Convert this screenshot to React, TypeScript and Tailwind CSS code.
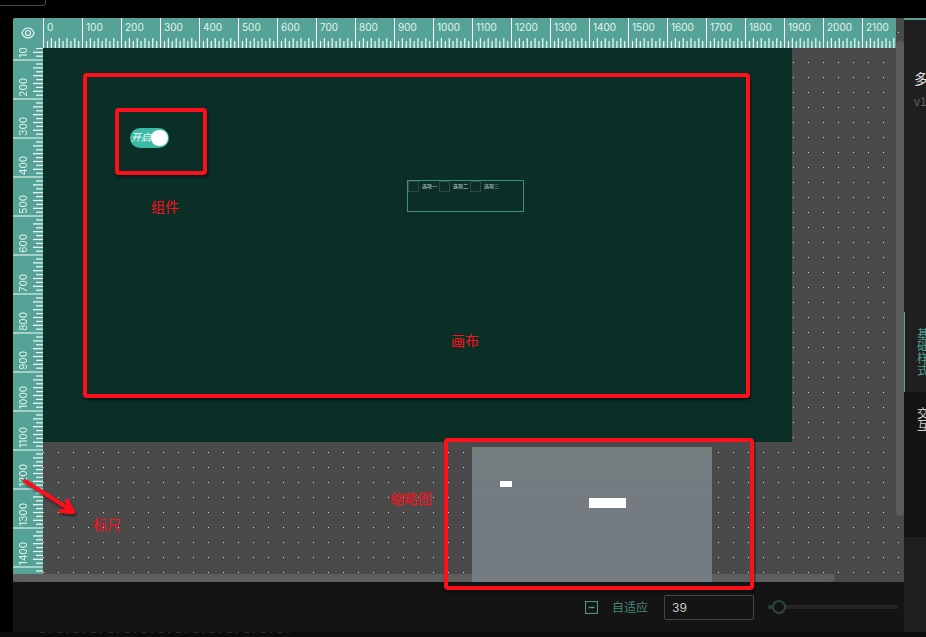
import React, { useState } from "react";

const columns = Array.from({ length: 22 }, (_, i) => i * 100);
const rows = Array.from({ length: 15 }, (_, i) => (i + 1) * 100);
const lastRowLabel = 1400;
const tickIndexes = [1, 2, 3, 4, 5, 6, 7, 8, 9];

function HorizontalRuler() {
  return (
    <div className="flex h-[30px] min-w-0 flex-1 overflow-hidden bg-[#55a396]">
      {columns.map((value) => (
        <div key={value} className="relative h-full w-[39px] shrink-0 border-l border-white">
          <span className="block pl-[3px] pt-[2px] font-['Inter','Liberation_Sans',sans-serif] text-[10px] leading-[14px] text-[#e3f3ef]">
            {value}
          </span>
          <svg className="absolute bottom-0 left-[-1px]" width="39" height="10" aria-hidden="true">
            {tickIndexes.map((n) => (
              <rect
                key={n}
                x={n * 3.9}
                y={n % 2 ? 3 : 0}
                width="1.2"
                height={n % 2 ? 7 : 10}
                fill="#f4fbf9"
              />
            ))}
          </svg>
        </div>
      ))}
    </div>
  );
}

function VerticalRuler() {
  return (
    <div className="w-[30px] shrink-0 overflow-hidden bg-[#55a396]">
      <div className="-mt-[26px] h-0">
        {rows.map((value) => (
          <div
            key={value}
            className="relative flex h-[39px] w-full items-end border-b-2 border-[#a5d0c8] pb-px pl-[3px]"
          >
            {value <= lastRowLabel && (
              <span className="rotate-180 font-['Inter','Liberation_Sans',sans-serif] text-[10px] leading-[14px] text-[#e3f3ef] [writing-mode:vertical-rl]">
                {value}
              </span>
            )}
            <svg className="absolute right-0 top-[-1px]" width="10" height="39" aria-hidden="true">
              {tickIndexes.map((n) => (
                <rect
                  key={n}
                  x={n % 2 ? 3 : 0}
                  y={n * 3.9 - 0.5}
                  width={n % 2 ? 7 : 10}
                  height="1.2"
                  fill="#f4fbf9"
                />
              ))}
            </svg>
          </div>
        ))}
      </div>
    </div>
  );
}

function CanvasObjects() {
  const [on, setOn] = useState(true);
  return (
    <>
      <label className="absolute left-[87px] top-[80px] flex h-5 w-[39px] items-center rounded-full bg-[#3bbba6] pl-px">
        <input
          type="checkbox"
          role="switch"
          checked={on}
          onChange={() => setOn(!on)}
          className="absolute inset-0 m-0 appearance-none"
        />
        <span className="text-[10px] italic leading-none text-white">开启</span>
        <span className="absolute right-px top-[2px] h-4 w-[17px] rounded-full bg-white" />
      </label>
      <fieldset className="absolute left-[364px] top-[132px] flex h-8 w-[117px] items-start border border-[#3f8f7d]">
        {["选项一", "选项二", "选项三"].map((name) => (
          <label key={name} className="flex w-[31px] shrink-0 items-center gap-[3px] whitespace-nowrap text-[5px] leading-none text-[#cfdcd8]">
            <input type="checkbox" className="m-0 h-[11px] w-[11px] shrink-0 appearance-none border border-[#2e4a43]" />
            {name}
          </label>
        ))}
      </fieldset>
    </>
  );
}

function Thumbnail() {
  return (
    <div className="absolute bottom-0 left-[459px] h-[135px] w-60 bg-linear-to-b from-[#747d7e] to-[#747c82] to-40%">
      <div className="absolute left-7 top-[34px] h-[6px] w-3 bg-white" />
      <div className="absolute left-[117px] top-[51px] h-[10px] w-[37px] bg-white" />
    </div>
  );
}

function Toolbar() {
  const [zoom, setZoom] = useState("39");
  return (
    <div className="flex h-[50px] shrink-0 items-center justify-end bg-[#141414] pr-[6px]">
      <button type="button" aria-label="缩小" className="mr-[14px] mt-px text-[#4c9686]">
        <svg width="13" height="13" viewBox="0 0 13 13" fill="none" stroke="currentColor">
          <rect x="0.5" y="0.5" width="12" height="12" strokeWidth="1.2" />
          <path d="M3.5 6.5h6" strokeWidth="1.5" />
        </svg>
      </button>
      <button type="button" className="mr-4 mt-[2px] text-[12px] leading-4 text-[#47897b]">自适应</button>
      <input
        aria-label="缩放比例"
        value={zoom}
        onChange={(e) => setZoom(e.target.value)}
        className="mr-[14px] h-[25px] w-[90px] rounded-xs border border-[#464646] bg-transparent px-[7px] font-['Inter','Liberation_Sans',sans-serif] text-[12px] text-[#c9c9c9]"
      />
      <input
        type="range"
        aria-label="缩放"
        min={35}
        max={150}
        value={Number(zoom) || 35}
        onChange={(e) => setZoom(e.target.value)}
        className="h-4 w-[130px] appearance-none bg-transparent [&::-webkit-slider-runnable-track]:h-1 [&::-webkit-slider-runnable-track]:rounded-full [&::-webkit-slider-runnable-track]:bg-[linear-gradient(90deg,#234039_8px,#262626_0)] [&::-webkit-slider-thumb]:-mt-[5px] [&::-webkit-slider-thumb]:h-[14px] [&::-webkit-slider-thumb]:w-[14px] [&::-webkit-slider-thumb]:appearance-none [&::-webkit-slider-thumb]:rounded-full [&::-webkit-slider-thumb]:border-2 [&::-webkit-slider-thumb]:border-[#29493f] [&::-webkit-slider-thumb]:bg-[#141414]"
      />
    </div>
  );
}

function SidePanel() {
  return (
    <aside className="flex w-[22px] shrink-0 flex-col overflow-hidden border-t-2 border-[#55a396] bg-[#1f1f1f]">
      <div className="h-[292px] shrink-0 whitespace-nowrap pl-[10px] pt-[49px]">
        <p className="text-[14px] leading-5 text-[#e6e6e6]">多</p>
        <p className="mt-[3px] text-[12px] leading-5 text-[#5b6065]">v1</p>
      </div>
      <div className="flex h-[225px] shrink-0 flex-col bg-[#141414]">
        <button type="button" className="flex h-20 w-10 items-center border-l border-[#55a396] bg-[#1f1f1f] pl-3 pt-[2px]">
          <span className="w-3 text-[12px] leading-3 text-[#4fa090]">基础样式</span>
        </button>
        <button type="button" className="flex h-[56px] w-10 items-center pl-[13px]">
          <span className="w-3 text-[12px] leading-3 text-[#cfcfcf]">交互</span>
        </button>
      </div>
    </aside>
  );
}

function Annotations() {
  const frame = "absolute rounded-[4px] border-4 border-[#fd0f1b] shadow-[1px_2px_3px_rgba(0,0,0,0.5)]";
  const note = "absolute whitespace-nowrap text-[14px] leading-5 text-[#fd0f1b]";
  return (
    <div className="pointer-events-none">
      <div className={`${frame} left-[83px] top-[73px] h-[325px] w-[667px]`} />
      <div className={`${frame} left-[115px] top-[108px] h-[67px] w-[92px]`} />
      <div className={`${frame} left-[444px] top-[438px] h-[152px] w-[310px]`} />
      <span className={`${note} left-[151px] top-[197px]`}>组件</span>
      <span className={`${note} left-[451px] top-[331px]`}>画布</span>
      <span className={`${note} left-[93px] top-[515px]`}>标尺</span>
      <span className={`${note} left-[390px] top-[489px]`}>缩略图</span>
      <svg
        className="absolute left-5 top-[475px] drop-shadow-[1px_2px_1px_rgba(0,0,0,0.5)]"
        width="60"
        height="44"
        fill="none"
        stroke="#fd0f1b"
        strokeWidth="4"
        strokeLinecap="round"
        strokeLinejoin="round"
        aria-hidden="true"
      >
        <path d="M5 6 52 36" />
        <path d="M47 26 53 37 41 36" strokeWidth="4.500" />
      </svg>
    </div>
  );
}

export default function App() {
  return (
    <div className="relative flex h-screen flex-col overflow-hidden bg-black font-['Liberation_Sans','Noto_Sans_CJK_SC',sans-serif]">
      <div className="h-[18px] shrink-0">
        <div className="h-[6px] w-[46px] rounded-br border-b border-r border-[#4a4a4a]" />
      </div>
      <div className="flex min-h-0 flex-1 pl-[13px]">
        <main className="flex min-w-0 flex-1 flex-col">
          <div className="relative flex min-h-0 flex-1 flex-col overflow-hidden rounded-tl-xs bg-[linear-gradient(#4a4a4a_14px,transparent_0),linear-gradient(90deg,#f2cfcf_1px,#4a4a4a_0)] bg-[size:15px_15px]">
            <div className="flex shrink-0 pr-2">
              <button type="button" aria-label="显示参考线" className="flex h-[30px] w-[30px] shrink-0 items-center justify-center bg-[#55a396] text-[#e9f5f2]">
                <svg width="14" height="12" viewBox="0 0 14 12" fill="none" stroke="currentColor" strokeWidth="1.200">
                  <path d="M0.800 6C2.300 2.600 4.400 1 7 1s4.700 1.600 6.200 5C11.700 9.400 9.600 11 7 11S2.300 9.400 0.800 6Z" />
                  <circle cx="7" cy="6" r="2.500" />
                </svg>
              </button>
              <HorizontalRuler />
            </div>
            <div className="flex min-h-0 flex-1 pb-2">
              <VerticalRuler />
              <div className="relative h-[394px] w-[749px] shrink-0 bg-[#0b2e26]">
                <CanvasObjects />
              </div>
            </div>
            <div className="absolute bottom-0 left-0 h-2 w-[822px] rounded-full rounded-tl-none bg-[#5e5e5e]" />
            <div className="absolute right-0 top-[23px] h-[475px] w-2 rounded-full bg-[#5e5e5e]/90" />
            <Thumbnail />
          </div>
          <Toolbar />
        </main>
        <SidePanel />
      </div>
      <div className="h-[5px] shrink-0 bg-[#0c0c0c]">
        <div className="ml-10 h-px w-[250px] bg-[repeating-linear-gradient(90deg,#2b2b2b_0_5px,transparent_5px_9px,#2b2b2b_9px_11px,transparent_11px_17px)]" />
      </div>
      <Annotations />
    </div>
  );
}
